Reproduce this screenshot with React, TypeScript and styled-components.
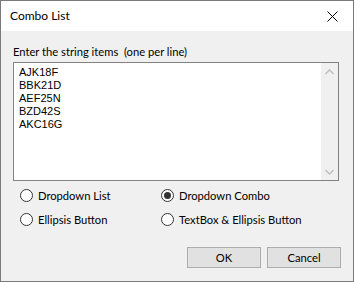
import React from "react";
import styled, { createGlobalStyle } from "styled-components";

const Global = createGlobalStyle`
  html, body { margin: 0; padding: 0; background: #ffffff; }
  * { box-sizing: border-box; }
`;

const UI_FONT = `Lato, "Noto Sans", "Liberation Sans", sans-serif`;

const Window = styled.div`
  width: 354px;
  height: 282px;
  border: 1px solid #7a7a7a;
  display: flex;
  flex-direction: column;
  font-family: ${UI_FONT};
  font-size: 11.2px;
  color: #000;
  background: #f0f0f0;
`;

const TitleBar = styled.div`
  height: 30px;
  background: #ffffff;
  display: flex;
  align-items: center;
  justify-content: space-between;
  padding-left: 9px;
`;

const Title = styled.span`
  font-size: 12px;
  line-height: 16px;
  margin-top: -1px;
`;

const CloseButton = styled.div`
  width: 46px;
  height: 30px;
  display: flex;
  align-items: center;
  justify-content: center;
  margin-right: -2px;
`;

const Body = styled.div`
  flex: 1;
  display: flex;
  flex-direction: column;
  padding: 13px 12px 0 12px;
`;

const Label = styled.div`
  white-space: pre;
  line-height: 16px;
  height: 18px;
`;

const ListBox = styled.div`
  width: 326px;
  height: 119px;
  border: 1px solid #828282;
  background: #ffffff;
  display: flex;
`;

const ListText = styled.div`
  flex: 1;
  padding: 3px 5px;
  font-family: "Liberation Sans", Arial, sans-serif;
  font-size: 11px;
  line-height: 13px;
  white-space: pre-line;
`;

const ScrollBar = styled.div`
  width: 17px;
  background: #f0f0f0;
  display: flex;
  flex-direction: column;
  justify-content: space-between;
`;

const ScrollArrow = styled.div`
  height: 17px;
  display: flex;
  align-items: center;
  justify-content: center;
`;

const RadioGrid = styled.div`
  display: grid;
  grid-template-columns: 141px 1fr;
  grid-auto-rows: 24px;
  margin-top: 2px;
  padding-left: 7px;
`;

const RadioItem = styled.label`
  display: flex;
  align-items: center;
  gap: 5px;
`;

const RadioCircle = styled.span<{ $checked?: boolean }>`
  width: 13px;
  height: 13px;
  border-radius: 50%;
  border: 1px solid #333333;
  background: #ffffff;
  display: flex;
  align-items: center;
  justify-content: center;
  &::after {
    content: "";
    display: ${(p) => (p.$checked ? "block" : "none")};
    width: 7px;
    height: 7px;
    border-radius: 50%;
    background: #333333;
  }
`;

const ButtonRow = styled.div`
  display: flex;
  justify-content: flex-end;
  gap: 6px;
  margin-top: 16px;
`;

const Button = styled.div`
  width: 74px;
  height: 21px;
  border: 1px solid #adadad;
  background: #e1e1e1;
  display: flex;
  align-items: center;
  justify-content: center;
  line-height: 16px;
`;

const items = ["AJK18F", "BBK21D", "AEF25N", "BZD42S", "AKC16G"];

const options = [
  { label: "Dropdown List", checked: false },
  { label: "Dropdown Combo", checked: true },
  { label: "Ellipsis Button", checked: false },
  { label: "TextBox & Ellipsis Button", checked: false },
];

export default function App() {
  return (
    <>
      <Global />
      <Window>
        <TitleBar>
          <Title>Combo List</Title>
          <CloseButton>
            <svg width="11" height="11" viewBox="0 0 11 11">
              <path d="M0.5 0.5 L10.5 10.5 M10.5 0.5 L0.5 10.5" stroke="#000" strokeWidth="1" fill="none" />
            </svg>
          </CloseButton>
        </TitleBar>
        <Body>
          <Label>{"Enter the string items  (one per line)"}</Label>
          <ListBox>
            <ListText>{items.join("\n")}</ListText>
            <ScrollBar>
              <ScrollArrow>
                <svg width="9" height="6" viewBox="0 0 9 6">
                  <path d="M0.5 5 L4.5 1 L8.5 5" stroke="#c2c2c2" strokeWidth="1.6" fill="none" />
                </svg>
              </ScrollArrow>
              <ScrollArrow>
                <svg width="9" height="6" viewBox="0 0 9 6">
                  <path d="M0.5 1 L4.5 5 L8.5 1" stroke="#c2c2c2" strokeWidth="1.6" fill="none" />
                </svg>
              </ScrollArrow>
            </ScrollBar>
          </ListBox>
          <RadioGrid>
            {options.map((o) => (
              <RadioItem key={o.label}>
                <RadioCircle $checked={o.checked} />
                <span>{o.label}</span>
              </RadioItem>
            ))}
          </RadioGrid>
          <ButtonRow>
            <Button>OK</Button>
            <Button>Cancel</Button>
          </ButtonRow>
        </Body>
      </Window>
    </>
  );
}
